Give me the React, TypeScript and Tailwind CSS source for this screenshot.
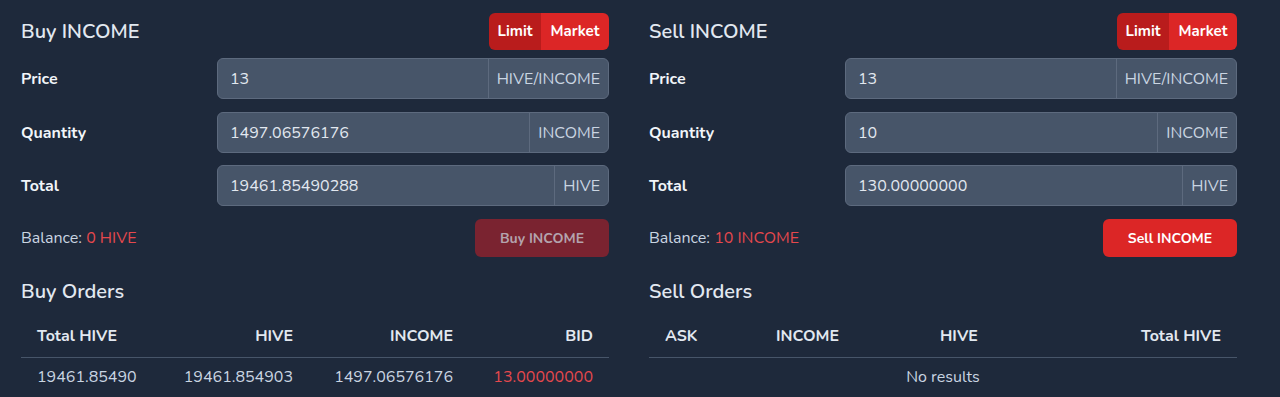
import { useState } from "react";

type Side = "buy" | "sell";

const FONT = "font-['Nunito','Lato','Noto_Sans',sans-serif]";

export default function App() {
  return (
    <div className={`min-h-[397px] w-full bg-[#1e293b] text-slate-200 ${FONT}`}>
      <div className="flex gap-[40px] pl-[21px] pr-[43px]">
        <TradePanel
          side="buy"
          title="Buy INCOME"
          price="13"
          qty="1497.06576176"
          total="19461.85490288"
          balance="0 HIVE"
        />
        <TradePanel
          side="sell"
          title="Sell INCOME"
          price="13"
          qty="10"
          total="130.00000000"
          balance="10 INCOME"
        />
      </div>
    </div>
  );
}

function TradePanel({
  side,
  title,
  price,
  qty,
  total,
  balance,
}: {
  side: Side;
  title: string;
  price: string;
  qty: string;
  total: string;
  balance: string;
}) {
  const [mode, setMode] = useState<"limit" | "market">("limit");
  const disabled = side === "buy";

  return (
    <div className="w-[588px] shrink-0">
      <div className="mt-[13px] flex h-[37px] items-center justify-between">
        <h2 className="text-[20px] font-semibold text-slate-200">{title}</h2>
        <div className="flex h-[37px] overflow-hidden rounded-md text-[15px] font-bold text-white">
          <button
            onClick={() => setMode("limit")}
            className={`w-[52px] ${mode === "limit" ? "bg-[#b91c1c]" : "bg-[#dc2626]"}`}
          >
            Limit
          </button>
          <button
            onClick={() => setMode("market")}
            className={`w-[68px] ${mode === "market" ? "bg-[#b91c1c]" : "bg-[#dc2626]"}`}
          >
            Market
          </button>
        </div>
      </div>

      <div className="mt-[8px]">
        <Field label="Price" value={price} unit="HIVE/INCOME" />
      </div>
      <div className="mt-[13px]">
        <Field label="Quantity" value={qty} unit="INCOME" />
      </div>
      <div className="mt-[12px]">
        <Field label="Total" value={total} unit="HIVE" />
      </div>

      <div className="mt-[13px] flex h-[38px] items-center justify-between">
        <p className="text-[16px] text-slate-300">
          Balance: <span className="text-[#e5484d]">{balance}</span>
        </p>
        <button
          disabled={disabled}
          className={`h-[38px] w-[134px] rounded-md text-[14px] font-bold ${
            disabled ? "bg-[#7a2330] text-[#b4a3ad]" : "bg-[#dc2626] text-white"
          }`}
        >
          {title}
        </button>
      </div>

      <h3 className="mt-[21px] text-[20px] font-semibold leading-[28px] text-slate-200">
        {side === "buy" ? "Buy Orders" : "Sell Orders"}
      </h3>

      {side === "buy" ? <BuyTable /> : <SellTable />}
    </div>
  );
}

function Field({ label, value, unit }: { label: string; value: string; unit: string }) {
  return (
    <div className="flex items-center">
      <label className="w-[196px] shrink-0 text-[16px] font-bold text-slate-100">{label}</label>
      <div className="flex h-[41px] flex-1 overflow-hidden rounded-md border border-[#5d6a7e] bg-[#475569]">
        <input
          readOnly
          value={value}
          className="min-w-0 flex-1 bg-transparent pl-[12px] text-[16px] text-slate-200 outline-none"
        />
        <span className="flex items-center border-l border-[#5d6a7e] px-[8px] text-[16px] text-slate-300">
          {unit}
        </span>
      </div>
    </div>
  );
}

function BuyTable() {
  return (
    <div className="mt-[8px] text-[16px]">
      <div className="grid h-[44px] grid-cols-[144px_144px_160px_1fr] items-center border-b border-[#475569] font-bold text-slate-200">
        <span className="px-4">Total HIVE</span>
        <span className="px-4 text-right">HIVE</span>
        <span className="px-4 text-right">INCOME</span>
        <span className="px-4 text-right">BID</span>
      </div>
      <div className="grid h-[38px] grid-cols-[144px_144px_160px_1fr] items-center text-slate-300">
        <span className="px-4">19461.85490</span>
        <span className="px-4 text-right">19461.854903</span>
        <span className="px-4 text-right">1497.06576176</span>
        <span className="px-4 text-right text-[#e5484d]">13.00000000</span>
      </div>
    </div>
  );
}

function SellTable() {
  return (
    <div className="mt-[8px] text-[16px]">
      <div className="grid h-[44px] grid-cols-[111px_164px_1fr_auto] items-center border-b border-[#475569] font-bold text-slate-200">
        <span className="px-4">ASK</span>
        <span className="px-4">INCOME</span>
        <span className="px-4">HIVE</span>
        <span className="px-4 text-right">Total HIVE</span>
      </div>
      <div className="flex h-[38px] items-center justify-center text-slate-300">No results</div>
    </div>
  );
}
